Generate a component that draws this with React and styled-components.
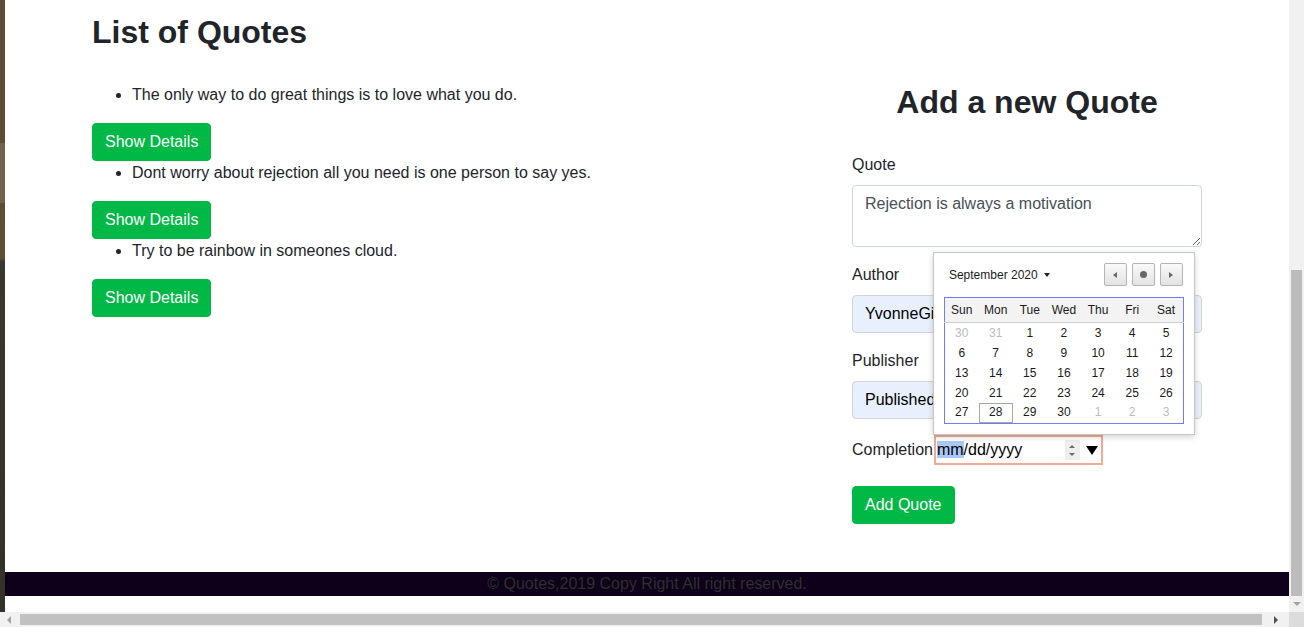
import React from "react";
import styled, { createGlobalStyle, css } from "styled-components";

const GlobalStyle = createGlobalStyle`
  html, body {
    margin: 0;
    padding: 0;
    overflow: hidden;
  }
  body {
    font-family: "Liberation Sans", Arial, sans-serif;
    font-size: 16px;
    line-height: 1.5;
    color: #212529;
  }
  * {
    box-sizing: border-box;
  }
`;

const Screen = styled.div`
  width: 1304px;
  height: 627px;
  display: grid;
  grid-template-columns: 1289px 15px;
  grid-template-rows: 612px 15px;
`;

const Viewport = styled.div`
  display: flex;
  overflow: hidden;
`;

const BackdropStrip = styled.div`
  flex: 0 0 5px;
  background:
    linear-gradient(to bottom, transparent 0, transparent 143px, rgba(255, 255, 255, 0.12) 143px, rgba(255, 255, 255, 0.12) 203px, transparent 203px),
    linear-gradient(to bottom, #5c4b35 0, #5f4d34 258px, #3b372e 262px, #34312a 100%);
`;

const Page = styled.div`
  flex: 1;
  background: #fff;
  display: flex;
  flex-direction: column;
`;

const Main = styled.main`
  flex: 1;
`;

const Container = styled.div`
  width: 1140px;
  margin: 0 auto;
  padding: 0 15px;
`;

const Row = styled.div`
  display: flex;
  margin: 0 -15px;
`;

const Column = styled.div`
  flex: 0 0 ${(props) => props.span};
  max-width: ${(props) => props.span};
  padding: ${(props) => props.top}px 15px 0;
`;

const Heading = styled.h2`
  margin: 0 0 32px;
  font-size: 32px;
  font-weight: 700;
  line-height: 38px;
  text-align: ${(props) => (props.center ? "center" : "left")};
`;

const QuoteList = styled.ul`
  margin: 0 0 16px;
  padding-left: 40px;
  line-height: 24px;
`;

const GreenButton = styled.button`
  display: block;
  height: 38px;
  padding: 6px 12px;
  border: 1px solid #00b846;
  border-radius: 4px;
  background: #00b846;
  color: #fff;
  font-family: inherit;
  font-size: 16px;
  line-height: 24px;
  cursor: pointer;
`;

const FormGroup = styled.div`
  margin-bottom: 16px;
`;

const Label = styled.label`
  display: ${(props) => (props.inline ? "inline-block" : "block")};
  margin-bottom: ${(props) => (props.inline ? 0 : 8)}px;
  line-height: 24px;
`;

const fieldBase = css`
  display: block;
  width: 100%;
  padding: 6px 12px;
  border: 1px solid #ced4da;
  border-radius: 4px;
  font-family: "Liberation Sans", Arial, sans-serif;
  font-size: 16px;
  line-height: 24px;
  outline: none;
`;

const TextArea = styled.textarea`
  ${fieldBase}
  height: 62px;
  color: #495057;
  background: #fff;
  resize: vertical;
`;

const TextInput = styled.input`
  ${fieldBase}
  height: 38px;
  color: #000;
  background: #e8f0fe;
`;

const DateRow = styled.div`
  display: flex;
  align-items: center;
  height: 30px;
  margin-bottom: 21px;
`;

const DateField = styled.div`
  position: relative;
  width: 169px;
  height: 30px;
  margin-left: 1px;
  border: 2px solid #f0aa95;
  display: flex;
  align-items: center;
  padding-left: 1px;
  color: #000;
  line-height: 20px;
`;

const DateText = styled.span`
  flex: 1;
  white-space: nowrap;
`;

const Selected = styled.span`
  background: #aac8f5;
`;

const Spinner = styled.span`
  width: 15px;
  height: 20px;
  background: #eeeeee;
  display: flex;
  flex-direction: column;
  align-items: center;
  justify-content: center;
  gap: 5px;
`;

const Tri = styled.span`
  width: 0;
  height: 0;
  border-left: 3px solid transparent;
  border-right: 3px solid transparent;
  ${(props) =>
    props.up
      ? `border-bottom: 3px solid #6a6a6a;`
      : `border-top: 3px solid #6a6a6a;`}
`;

const DropArrow = styled.span`
  width: 0;
  height: 0;
  margin: 0 3px 0 6px;
  border-left: 6px solid transparent;
  border-right: 6px solid transparent;
  border-top: 9px solid #000;
`;

const Popup = styled.div`
  position: absolute;
  left: -3px;
  bottom: calc(100% + 2px);
  width: 262px;
  padding: 10px;
  background: #fff;
  border: 1px solid #c6c6c6;
  box-shadow: 0 2px 6px rgba(0, 0, 0, 0.18);
  z-index: 5;
  font-size: 12px;
  line-height: 14px;
  color: #1a1a1a;
`;

const PopupHeader = styled.div`
  display: flex;
  align-items: center;
  height: 23px;
  margin-bottom: 11px;
  padding-left: 5px;
`;

const MonthLabel = styled.span`
  display: flex;
  align-items: center;
  gap: 6px;
  flex: 1;
`;

const Caret = styled.span`
  width: 0;
  height: 0;
  border-left: 3.5px solid transparent;
  border-right: 3.5px solid transparent;
  border-top: 4px solid #222;
`;

const NavGroup = styled.div`
  display: flex;
  gap: 5px;
  padding-right: 1px;
`;

const NavButton = styled.span`
  width: 23px;
  height: 23px;
  border: 1px solid #b4b4b4;
  border-radius: 2px;
  background: linear-gradient(#f9f9f9, #e3e3e3);
  display: flex;
  align-items: center;
  justify-content: center;
`;

const NavArrow = styled.span`
  width: 0;
  height: 0;
  border-top: 3.5px solid transparent;
  border-bottom: 3.5px solid transparent;
  ${(props) =>
    props.left
      ? `border-right: 4px solid #666;`
      : `border-left: 4px solid #666;`}
`;

const NavDot = styled.span`
  width: 7px;
  height: 7px;
  border-radius: 50%;
  background: #666;
`;

const Calendar = styled.table`
  width: 240px;
  table-layout: fixed;
  border-collapse: collapse;
  border: 1px solid #6f7ff2;
`;

const DayHead = styled.th`
  height: 25px;
  padding: 0;
  font-weight: 400;
  background: #f3f3f3;
  border-bottom: 1px solid #cfcfcf;
`;

const DayCell = styled.td`
  height: ${(props) => (props.last ? 21 : 20)}px;
  padding: 0 0 ${(props) => (props.last ? 1 : 0)}px;
  text-align: center;
  color: ${(props) => (props.muted ? "#bcbcbc" : "#1a1a1a")};
  ${(props) => props.today && `box-shadow: inset 0 0 0 1px #a8a8a8, inset 0 -1px 0 #fff;`}
`;

const Footer = styled.footer`
  height: 24px;
  margin-bottom: 16px;
  background: #0e001a;
  color: #2f2f2f;
  text-align: center;
  line-height: 24px;
  font-size: 16px;
`;

const VScroll = styled.div`
  background: #f1f1f1;
  display: flex;
  flex-direction: column;
  align-items: center;
`;

const VThumb = styled.div`
  margin-top: auto;
  width: 11px;
  height: 326px;
  background: #bcbcbc;
`;

const ArrowBox = styled.div`
  flex: 0 0 ${(props) => props.size}px;
  width: ${(props) => (props.vertical ? "15px" : "auto")};
  margin-left: ${(props) => (props.push ? "auto" : "0")};
  display: flex;
  align-items: center;
  justify-content: center;
`;

const ScrollTri = styled.span`
  width: 0;
  height: 0;
  ${(props) => {
    const c = props.active ? "#505050" : "#a3a3a3";
    if (props.dir === "down")
      return `border-left: 4px solid transparent; border-right: 4px solid transparent; border-top: 4px solid ${c};`;
    if (props.dir === "left")
      return `border-top: 4px solid transparent; border-bottom: 4px solid transparent; border-right: 4px solid ${c};`;
    return `border-top: 4px solid transparent; border-bottom: 4px solid transparent; border-left: 4px solid ${c};`;
  }}
`;

const HScroll = styled.div`
  background: #f1f1f1;
  display: flex;
  align-items: center;
`;

const HThumb = styled.div`
  flex: 0 0 1242px;
  height: 11px;
  margin-left: 2px;
  background: #c1c1c1;
`;

const Corner = styled.div`
  background: #dcdcdc;
`;

const quotes = [
  "The only way to do great things is to love what you do.",
  "Dont worry about rejection all you need is one person to say yes.",
  "Try to be rainbow in someones cloud.",
];

const days = ["Sun", "Mon", "Tue", "Wed", "Thu", "Fri", "Sat"];

const weeks = [
  [30, 31, 1, 2, 3, 4, 5],
  [6, 7, 8, 9, 10, 11, 12],
  [13, 14, 15, 16, 17, 18, 19],
  [20, 21, 22, 23, 24, 25, 26],
  [27, 28, 29, 30, 1, 2, 3],
];

const DatePicker = () => (
  <Popup>
    <PopupHeader>
      <MonthLabel>
        September 2020 <Caret />
      </MonthLabel>
      <NavGroup>
        <NavButton>
          <NavArrow left />
        </NavButton>
        <NavButton>
          <NavDot />
        </NavButton>
        <NavButton>
          <NavArrow />
        </NavButton>
      </NavGroup>
    </PopupHeader>
    <Calendar>
      <thead>
        <tr>
          {days.map((d) => (
            <DayHead key={d}>{d}</DayHead>
          ))}
        </tr>
      </thead>
      <tbody>
        {weeks.map((week, w) => (
          <tr key={w}>
            {week.map((n, i) => (
              <DayCell
                key={i}
                last={w === 4}
                muted={(w === 0 && n > 20) || (w === 4 && n < 10)}
                today={w === 4 && n === 28}
              >
                {n}
              </DayCell>
            ))}
          </tr>
        ))}
      </tbody>
    </Calendar>
  </Popup>
);

export default function App() {
  return (
    <>
      <GlobalStyle />
      <Screen>
        <Viewport>
          <BackdropStrip />
          <Page>
            <Main>
              <Container>
                <Row>
                  <Column span="66.666667%" top={13}>
                    <Heading>List of Quotes</Heading>
                    {quotes.map((q) => (
                      <div key={q}>
                        <QuoteList>
                          <li>{q}</li>
                        </QuoteList>
                        <GreenButton>Show Details</GreenButton>
                      </div>
                    ))}
                  </Column>
                  <Column span="33.333333%" top={83}>
                    <Heading center>Add a new Quote</Heading>
                    <FormGroup>
                      <Label>Quote</Label>
                      <TextArea readOnly value="Rejection is always a motivation" />
                    </FormGroup>
                    <FormGroup>
                      <Label>Author</Label>
                      <TextInput readOnly value="YvonneGithinji" />
                    </FormGroup>
                    <FormGroup>
                      <Label>Publisher</Label>
                      <TextInput readOnly value="Published" />
                    </FormGroup>
                    <DateRow>
                      <Label inline>Completion</Label>
                      <DateField>
                        <DatePicker />
                        <DateText>
                          <Selected>mm</Selected>/dd/yyyy
                        </DateText>
                        <Spinner>
                          <Tri up />
                          <Tri />
                        </Spinner>
                        <DropArrow />
                      </DateField>
                    </DateRow>
                    <GreenButton>Add Quote</GreenButton>
                  </Column>
                </Row>
              </Container>
            </Main>
            <Footer>© Quotes,2019 Copy Right All right reserved.</Footer>
          </Page>
        </Viewport>
        <VScroll>
          <VThumb />
          <ArrowBox size={16} vertical>
            <ScrollTri dir="down" />
          </ArrowBox>
        </VScroll>
        <HScroll>
          <ArrowBox size={18}>
            <ScrollTri dir="left" />
          </ArrowBox>
          <HThumb />
          <ArrowBox size={27} push>
            <ScrollTri dir="right" active />
          </ArrowBox>
        </HScroll>
        <Corner />
      </Screen>
    </>
  );
}
